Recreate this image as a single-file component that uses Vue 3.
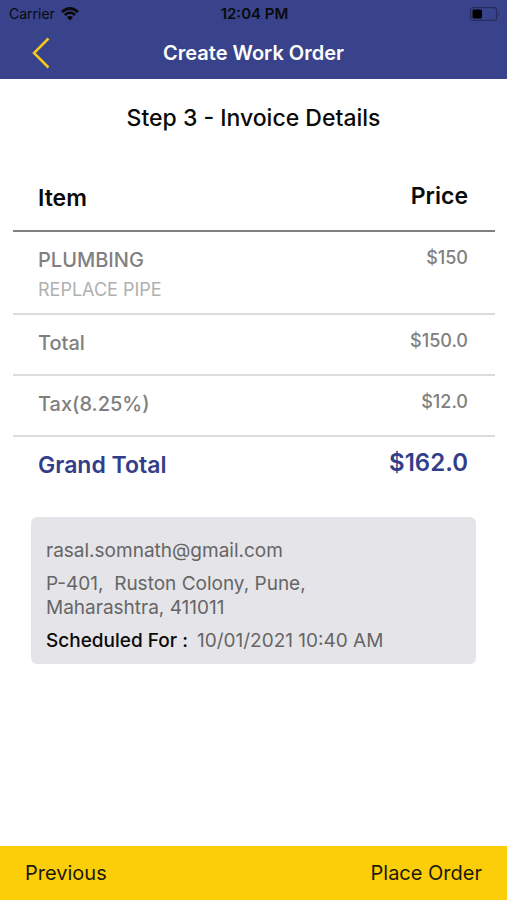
<template>
  <div class="screen">
    <header class="top">
      <div class="status-bar">
        <div class="carrier">
          <span>Carrier</span>
          <svg class="wifi" viewBox="0 0 18 14" aria-hidden="true">
            <path d="M1 5 Q9 -2 17 5" />
            <path d="M3.8 8 Q9 3.4 14.2 8" />
            <path class="dot" d="M5.9 10.3 Q9 7.6 12.1 10.3 L9 13.6 Z" />
          </svg>
        </div>
        <span class="clock">12:04 PM</span>
        <svg class="battery" viewBox="0 0 30 14" aria-hidden="true">
          <rect class="shell" x="0.6" y="0.6" width="26" height="12.8" rx="2.5" />
          <rect x="2.5" y="2.5" width="9.5" height="9" rx="1.5" />
          <path class="cap" d="M28 5 Q30 7 28 9 Z" />
        </svg>
      </div>
      <nav class="nav-bar">
        <button class="back" type="button" aria-label="Back">
          <svg viewBox="0 0 18 32" aria-hidden="true">
            <path d="M16.5 1.5 L2 16 L16.5 30.5" />
          </svg>
        </button>
        <h1>Create Work Order</h1>
      </nav>
    </header>

    <main>
      <h2>Step 3 - Invoice Details</h2>

      <table class="invoice">
        <thead>
          <tr>
            <th scope="col">Item</th>
            <th scope="col" class="price">Price</th>
          </tr>
        </thead>
        <tbody>
          <tr v-for="row in rows" :key="row.label" :class="row.type">
            <td>
              {{ row.label }}
              <div v-if="row.note" class="note">{{ row.note }}</div>
            </td>
            <td class="price">{{ row.price }}</td>
          </tr>
        </tbody>
      </table>

      <section class="details">
        <p>{{ order.email }}</p>
        <p class="address">{{ order.address }}</p>
        <p><strong>Scheduled For :</strong>{{ order.schedule }}</p>
      </section>
    </main>

    <footer class="actions">
      <button type="button">Previous</button>
      <button type="button">Place Order</button>
    </footer>
  </div>
</template>

<script setup>
import { reactive, ref } from 'vue';

// invoice lines
const rows = ref([
  { type: 'service', label: 'PLUMBING', note: 'REPLACE PIPE', price: '$150' },
  { type: 'line', label: 'Total', price: '$150.0' },
  { type: 'line', label: 'Tax(8.25%)', price: '$12.0' },
  { type: 'grand', label: 'Grand Total', price: '$162.0' }
]);

const order = reactive({
  email: 'rasal.somnath@gmail.com',
  address: 'P-401,  Ruston Colony, Pune,\nMaharashtra, 411011',
  schedule: '10/01/2021 10:40 AM'
});
</script>

<style>
body {
  margin: 0;
  background: #fff;
}
</style>

<style scoped>
.screen {
  display: flex;
  flex-direction: column;
  min-height: 100vh;
  font-family: Inter, "Liberation Sans", sans-serif;
  color: #0a0a0a;
}

button {
  padding: 0;
  border: 0;
  background: none;
  color: inherit;
  font: inherit;
  cursor: pointer;
}

/* header */
.top {
  background: #38438b;
}
.status-bar {
  display: grid;
  grid-template-columns: 1fr auto 1fr;
  align-items: center;
  height: 27px;
  padding: 0 7px 0 9px;
  font-size: 14px;
}
.carrier {
  display: flex;
  align-items: center;
  gap: 6px;
}
.clock {
  font-size: 15px;
  font-weight: 600;
}
.wifi {
  width: 18px;
  height: 14px;
  fill: none;
  stroke: #0a0a0a;
  stroke-width: 2.7;
}
.wifi .dot {
  fill: #0a0a0a;
  stroke: none;
}
.battery {
  justify-self: end;
  width: 30px;
  height: 14px;
}
.battery .shell {
  fill: none;
  stroke: #252c5c;
  stroke-width: 1.2;
}
.battery .cap {
  fill: #252c5c;
}
.nav-bar {
  display: grid;
  grid-template-columns: 1fr auto 1fr;
  align-items: center;
  height: 52px;
  padding: 0 32px;
}
.back {
  justify-self: start;
  width: 18px;
  height: 32px;
}
.back svg {
  display: block;
  fill: none;
  stroke: #f5c71c;
  stroke-width: 2.5;
}
h1 {
  margin: 0;
  color: #fff;
  font-size: 20px;
  font-weight: 600;
}

/* content */
main {
  flex: 1;
}
h2 {
  margin: 24px 0 36px;
  font-size: 23px;
  font-weight: 500;
  line-height: 30px;
  text-align: center;
}
.invoice {
  width: calc(100% - 25px);
  margin: 0 12px 0 13px;
  border-spacing: 0;
  color: #808080;
  font-size: 20px;
  font-weight: 500;
}
th,
td {
  padding: 13px 0 16px 25px;
  border-bottom: 2px solid #dcdcdc;
  line-height: 30px;
  text-align: left;
  vertical-align: top;
}
.price {
  padding-right: 27px;
  padding-left: 0;
  line-height: 26px;
  text-align: right;
}
th {
  padding-top: 14px;
  padding-bottom: 17px;
  border-color: #808080;
  color: #0a0a0a;
  font-size: 23px;
  font-weight: 600;
}
td.price {
  font-size: 18px;
}
.service td {
  padding-bottom: 8px;
}
.note {
  color: #b0b0b0;
  font-size: 18px;
  font-weight: 400;
  line-height: 30px;
}
.grand td {
  border: 0;
  color: #323e8a;
  font-size: 23px;
  font-weight: 600;
}
.grand td.price {
  font-size: 24px;
}

/* customer card */
.details {
  margin: 21px 31px 20px;
  padding: 22px 15px 11px;
  border-radius: 6px;
  background: #e5e4e8;
  color: #666;
  font-size: 19px;
  line-height: 24px;
}
.details p {
  margin: 0 0 9px;
}
.details p:last-child {
  margin: 0;
}
.address {
  white-space: pre-wrap;
}
.details strong {
  margin-right: 9px;
  color: #0a0a0a;
  font-weight: 500;
}

/* bottom bar */
.actions {
  display: flex;
  justify-content: space-between;
  padding: 0 25px;
  background: #fbce08;
  color: #1c1a0c;
  font-size: 20px;
}
.actions button {
  height: 54px;
}
</style>
